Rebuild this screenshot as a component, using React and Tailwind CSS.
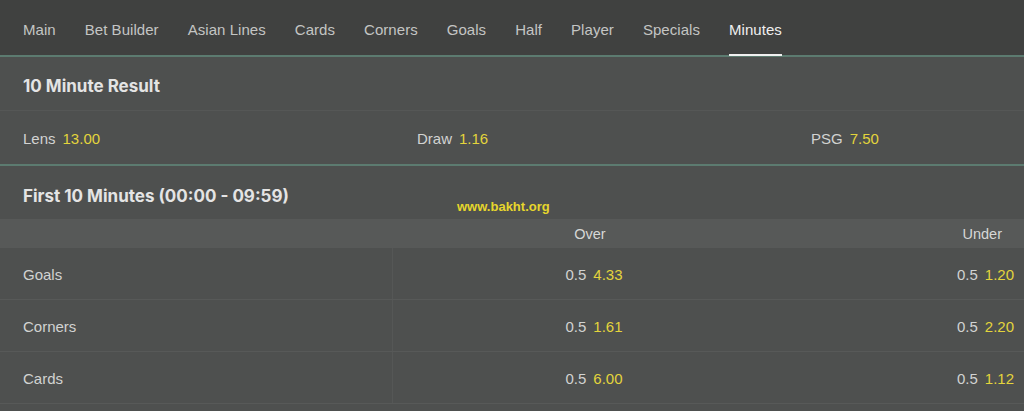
import React from "react";

const tabs = ["Main", "Bet Builder", "Asian Lines", "Cards", "Corners", "Goals", "Half", "Player", "Specials", "Minutes"];

const rows = [
  { label: "Goals", over: "4.33", under: "1.20" },
  { label: "Corners", over: "1.61", under: "2.20" },
  { label: "Cards", over: "6.00", under: "1.12" },
];

const heading = { fontFamily: 'Inter, "Liberation Sans", Arial, sans-serif' };

export default function App() {
  return (
    <div className="w-[1024px] h-[411px] overflow-hidden bg-[#4e504f] text-[15px] text-[#d2d3d2]" style={{ fontFamily: '"Liberation Sans", Arial, sans-serif' }}>
      <div className="h-[55px] bg-[#404140] flex items-stretch pl-[23px] gap-[29px] tracking-[0.05px]">
        {tabs.map((t) => (
          <div key={t} className={"relative flex items-center pt-[5px] " + (t === "Minutes" ? "text-[#efefef]" : "text-[#c4c5c4]")}>
            {t}
            {t === "Minutes" && <div className="absolute left-0 right-0 bottom-[-1px] h-[2px] bg-[#f0f0f0]" />}
          </div>
        ))}
      </div>
      <div className="h-[2px] bg-[#5c7b70]" />
      <div className="h-[54px] flex items-center px-[23px] pt-[7px] font-bold text-[17px] text-[#e4e4e4] border-b border-[#555756]" style={heading}>
        10 Minute Result
      </div>
      <div className="h-[53px] flex items-center pt-[3px]">
        {[["Lens", "13.00"], ["Draw", "1.16"], ["PSG", "7.50"]].map(([n, o]) => (
          <div key={n} className="w-[394px] shrink-0 pl-[23px] flex gap-[7px]">
            <span>{n}</span>
            <span className="text-[#e3d43c]">{o}</span>
          </div>
        ))}
      </div>
      <div className="h-[2px] bg-[#5c7b70]" />
      <div className="relative h-[53px] flex items-center px-[23px] pt-[8px] font-bold text-[17px] text-[#e4e4e4]" style={heading}>
        First 10 Minutes (00:00 - 09:59)
        <span className="absolute left-[457px] top-[31px] text-[13px] font-bold text-[#e6d62c]" style={{ fontFamily: '"Liberation Sans", Arial, sans-serif' }}>www.bakht.org</span>
      </div>
      <div className="h-[29px] bg-[#575958] flex items-center pt-[2px] text-[14.5px] text-[#d6d7d6]">
        <div className="w-[393px]" />
        <div className="w-[394px] text-center">Over</div>
        <div className="flex-1 text-right pr-[22px]">Under</div>
      </div>
      {rows.map((r) => (
        <div key={r.label} className="h-[52px] flex items-stretch border-b border-[#575958]">
          <div className="w-[393px] flex items-center pl-[23px] pt-[3px] border-r border-[#555756]">{r.label}</div>
          <div className="w-[394px] flex items-center justify-center gap-[7px] pl-[8px] pt-[3px]">
            <span>0.5</span>
            <span className="text-[#e3d43c]">{r.over}</span>
          </div>
          <div className="flex-1 flex items-center justify-end gap-[7px] pr-[10px] pt-[3px]">
            <span>0.5</span>
            <span className="text-[#e3d43c]">{r.under}</span>
          </div>
        </div>
      ))}
    </div>
  );
}
